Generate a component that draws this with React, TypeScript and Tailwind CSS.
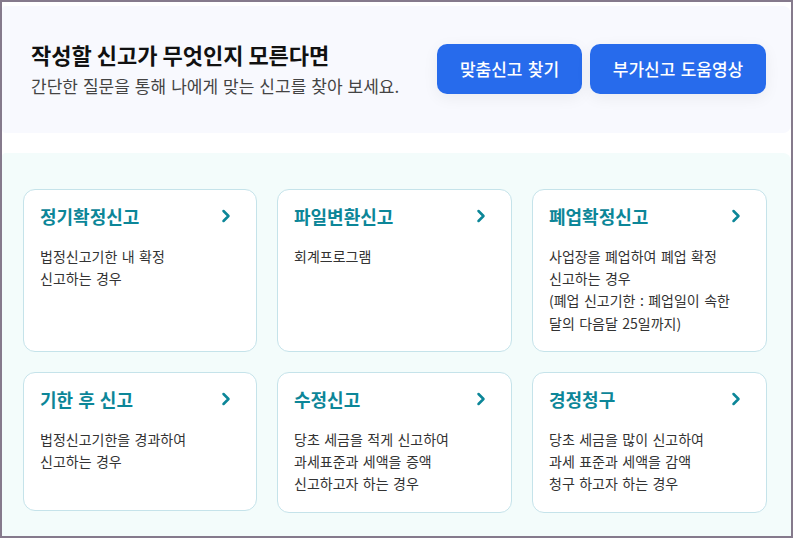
import { ChevronRight } from 'lucide-react';

interface CardProps {
  title: string;
  lines: string[];
  className: string;
}

const firstRow = [
  { title: '정기확정신고', lines: ['법정신고기한 내 확정', '신고하는 경우'], className: 'h-[163px]' },
  { title: '파일변환신고', lines: ['회계프로그램'], className: 'h-[163px]' },
  {
    title: '폐업확정신고',
    lines: ['사업장을 폐업하여 폐업 확정', '신고하는 경우', '(폐업 신고기한 : 폐업일이 속한', '달의 다음달 25일까지)'],
    className: 'h-[163px]',
  },
];

const secondRow = [
  { title: '기한 후 신고', lines: ['법정신고기한을 경과하여', '신고하는 경우'], className: 'h-[139px]' },
  { title: '수정신고', lines: ['당초 세금을 적게 신고하여', '과세표준과 세액을 증액', '신고하고자 하는 경우'], className: 'h-[141px]' },
  { title: '경정청구', lines: ['당초 세금을 많이 신고하여', '과세 표준과 세액을 감액', '청구 하고자 하는 경우'], className: 'h-[141px]' },
];

function Card({ title, lines, className }: CardProps) {
  return (
    <div className={`rounded-xl border border-[#c5e3ea] bg-white pl-4 pr-5 pt-[13px] ${className}`}>
      <div className="flex items-center justify-between">
        <h3 className="text-[18px] leading-[26px] font-bold text-[#0c8698] [word-spacing:1px]">{title}</h3>
        <ChevronRight size={20} strokeWidth={3} className="text-[#0c8698]" />
      </div>
      <div className="mt-[15.5px] text-[14px] leading-[22.4px] text-[#333] [word-spacing:1.3px]">
        {lines.map((line) => (
          <p key={line}>{line}</p>
        ))}
      </div>
    </div>
  );
}

export default function App() {
  return (
    <div
      className="h-[538px] w-[793px] overflow-hidden border-2 border-[#857a8c] bg-white"
      style={{ fontFamily: '"Noto Sans CJK KR", "Noto Sans", sans-serif' }}
    >
      <div className="pt-1">
        <div className="flex h-[127px] items-center justify-between rounded-lg rounded-l-[4px] bg-[#f8f9fe] pl-[29px] pr-[25px]">
          <div>
            <h2 className="text-[22px] leading-8 font-bold text-[#111]">작성할 신고가 무엇인지 모른다면</h2>
            <p className="text-[17px] leading-8 text-[#444] [word-spacing:1.2px]">간단한 질문을 통해 나에게 맞는 신고를 찾아 보세요.</p>
          </div>
          <div className="mb-[2px] flex gap-2">
            <button className="h-[50px] w-[145px] rounded-[10px] bg-[#276bec] text-[17px] font-medium text-white shadow-[0_4px_16px_rgba(0,0,0,0.06)] [word-spacing:1.5px]">
              맞춤신고 찾기
            </button>
            <button className="h-[50px] w-[176px] rounded-[10px] bg-[#276bec] text-[17px] font-medium text-white shadow-[0_4px_16px_rgba(0,0,0,0.06)] [word-spacing:1.5px]">
              부가신고 도움영상
            </button>
          </div>
        </div>
      </div>
      <div className="mt-5 h-[390px] rounded-lg rounded-l-[4px] bg-[#f3fcfb] pl-[21px] pt-9">
        <div className="grid w-[744px] grid-cols-[234px_235px_235px] items-start gap-x-5">
          {firstRow.map((card) => (
            <Card key={card.title} {...card} />
          ))}
        </div>
        <div className="mt-5 grid w-[744px] grid-cols-[234px_235px_235px] items-start gap-x-5">
          {secondRow.map((card) => (
            <Card key={card.title} {...card} />
          ))}
        </div>
      </div>
    </div>
  );
}
